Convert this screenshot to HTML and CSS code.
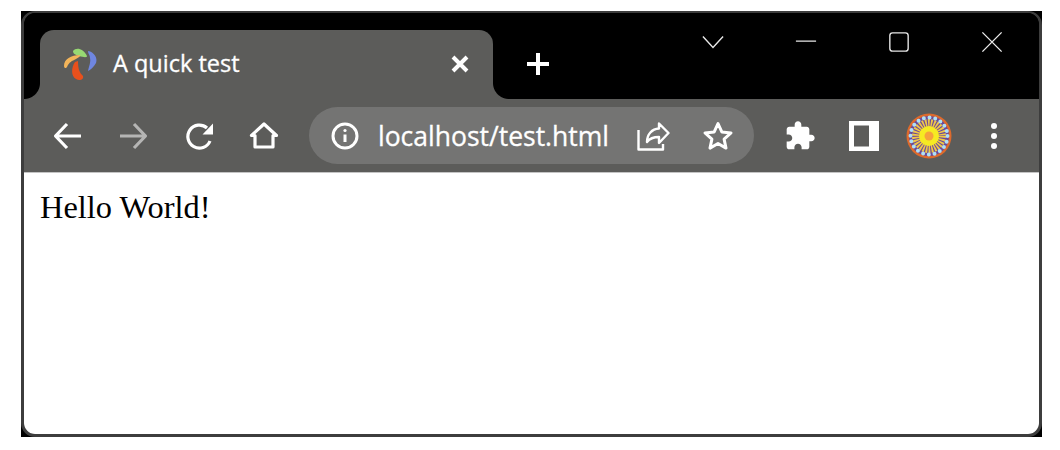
FILE: index.html
```html
<!DOCTYPE html>
<html lang="en">
<head>
  <meta charset="UTF-8" />
  <title>A quick test</title>
  <link rel="stylesheet" href="styles.css">
</head>
<body>
  <div class="window">
    <div class="frame">
      <div class="tabstrip">
        <div class="tab">
          <svg class="favicon" viewBox="0 0 36 36">
            <path fill="#97d873" d="M10 5C13 1 20 2 24 10C24 12 20 11 16 10C13 9 10 8 10 5z"/>
            <path fill="#6f86e0" d="M25 5C31 6 35 12 33 17C31 21 27 24 25 25C26 20 28 16 27 12C27 9 25 8 25 5z"/>
            <path fill="#f2b45a" d="M1 20C1 13 8 9 17 9C18 10 15 12 13 13C9 15 6 16 4 21C3 23 1 22 1 20z"/>
            <path fill="#e8501c" d="M12 16C8 22 8 30 13 33C16 35 21 34 20 30C17 27 15 24 15 15z"/>
          </svg>
          <span class="tab-title">A quick test</span>
          <svg class="tab-close" viewBox="0 0 20 20"><path d="M3 3l14 14M17 3L3 17"/></svg>
        </div>
        <svg class="newtab" viewBox="0 0 26 26"><path d="M13 2v22M2 13h22"/></svg>
        <div class="controls">
          <svg viewBox="0 0 24 24"><path d="M1 6l11 12L23 6"/></svg>
          <svg viewBox="0 0 24 24"><path d="M1 11h22"/></svg>
          <svg viewBox="0 0 24 24"><rect x="2" y="2" width="20" height="20" rx="3"/></svg>
          <svg viewBox="0 0 24 24"><path d="M1.500 1.500l21 21M22.500 1.500l-21 21"/></svg>
        </div>
      </div>

      <div class="toolbar">
        <button class="tool">
          <svg viewBox="0 0 32 32"><path d="M29 16H4M15 4L3.500 16 15 28"/></svg>
        </button>
        <button class="tool dim">
          <svg viewBox="0 0 32 32"><path d="M3 16h25M17 4l11.500 12L17 28"/></svg>
        </button>
        <button class="tool">
          <svg viewBox="0 0 32 32"><path d="M27 21A11.500 11.500 0 1 1 24 8"/><path class="solid" d="M30 3.500V14.500H19.500z"/></svg>
        </button>
        <button class="tool">
          <svg viewBox="0 0 32 32"><path d="M16 4L3.500 15.500H7V27H25V15.500H28.500z"/></svg>
        </button>

        <div class="omnibox">
          <svg class="info" viewBox="0 0 28 28">
            <circle cx="14" cy="14" r="12"/>
            <path d="M14 12.500V20"/>
            <circle class="solid" cx="14" cy="8.500" r="1.600"/>
          </svg>
          <span class="url">localhost/test.html</span>
          <svg class="omni-icon share" viewBox="0 0 34 34">
            <path d="M2.500 11V30.500H27V25"/>
            <path d="M23 4.500L32.500 14 23 24V18C18 18 14 19 11 23C11 15 16 10 23 9.500z"/>
          </svg>
          <svg class="omni-icon star" viewBox="0 0 32 32">
            <path d="M16 3.500l3.800 8.400 9.200 1-6.900 6.200 1.900 9-8-4.600-8 4.600 1.900-9-6.900-6.200 9.200-1z"/>
          </svg>
        </div>

        <div class="toolbar-end">
          <button class="tool">
            <svg viewBox="0 0 24 24"><path class="solid" d="M20.500 11H19V7c0-1.100-.9-2-2-2h-4V3.500C13 2.120 11.880 1 10.500 1S8 2.120 8 3.500V5H4c-1.100 0-1.990.9-1.990 2v3.800H3.500c1.490 0 2.700 1.210 2.700 2.700s-1.210 2.700-2.700 2.700H2V20c0 1.100.9 2 2 2h3.800v-1.500c0-1.490 1.210-2.700 2.700-2.700 1.490 0 2.700 1.210 2.700 2.700V22H17c1.100 0 2-.9 2-2v-4h1.500c1.380 0 2.500-1.120 2.500-2.500S21.880 11 20.500 11z"/></svg>
          </button>
          <button class="tool">
            <svg viewBox="0 0 32 32"><path class="solid" fill-rule="evenodd" d="M1 1h30v30H1zM6 5.500v21h15v-21z"/></svg>
          </button>
          <button class="tool">
            <svg class="avatar" viewBox="0 0 46 46">
              <circle cx="23" cy="23" r="22.500" fill="#dd6a2c"/>
              <circle cx="23" cy="23" r="20" fill="#6b4a98"/>
              <circle cx="23" cy="23" r="8.500" fill="none" stroke="#eec64a" stroke-width="17" stroke-dasharray="1.100 .68"/>
              <circle cx="23" cy="23" r="10" fill="#f6ea22"/>
              <circle cx="23" cy="23" r="4.500" fill="#f6a23c"/>
              <circle cx="23" cy="23" r="18.500" fill="none" stroke="#aee0f7" stroke-width="4" stroke-linecap="round" stroke-dasharray="0 5.810"/>
            </svg>
          </button>
          <button class="tool">
            <svg viewBox="0 0 32 32"><circle class="solid" cx="16" cy="6" r="3"/><circle class="solid" cx="16" cy="16" r="3"/><circle class="solid" cx="16" cy="26" r="3"/></svg>
          </button>
        </div>
      </div>

      <div class="page">Hello World!</div>
    </div>
  </div>
</body>
</html>
```

FILE: styles.css
```css
body {
  margin: 0;
  background: #fff;
}

.window {
  width: 1021px;
  height: 426px;
  margin: 11px 0 0 21px;
  background: #000;
}

.frame {
  display: flex;
  flex-direction: column;
  box-sizing: border-box;
  height: 100%;
  border: 3px solid #3d3d3d;
  border-top-width: 2px;
  border-radius: 14px;
  overflow: hidden;
}

/* tab strip */
.tabstrip {
  display: flex;
  align-items: flex-start;
  height: 86px;
  padding-left: 16px;
  background: #000;
}

.tab {
  position: relative;
  display: flex;
  align-items: center;
  box-sizing: border-box;
  width: 453px;
  height: 69px;
  margin-top: 17px;
  padding: 0 23px 2px 23px;
  background: #5c5c5a;
  border-radius: 14px 14px 0 0;
}

.tab::before,
.tab::after {
  content: "";
  position: absolute;
  bottom: 0;
  width: 16px;
  height: 16px;
}

.tab::before {
  left: -16px;
  background: radial-gradient(circle at 0 0, #000 15.5px, #5c5c5a 16.500px);
}

.tab::after {
  right: -16px;
  background: radial-gradient(circle at 100% 0, #000 15.5px, #5c5c5a 16.500px);
}

.favicon {
  width: 36px;
  height: 36px;
  margin-right: 14px;
}

.tab-title {
  flex: 1;
  margin-top: -2px;
  font-family: "Open Sans", sans-serif;
  font-size: 23.500px;
  color: #fff;
  -webkit-text-stroke: 0.3px #fff;
}

.tab-close {
  width: 20px;
  height: 20px;
  fill: none;
  stroke: #fff;
  stroke-width: 4;
}

.newtab {
  width: 26px;
  height: 26px;
  margin: 38px 0 0 32px;
  fill: none;
  stroke: #fff;
  stroke-width: 4;
}

.controls {
  display: flex;
  gap: 71px;
  margin: 18px 0 0 auto;
  padding-right: 36px;
}

.controls svg {
  width: 22px;
  height: 22px;
  fill: none;
  stroke: #e8e8e8;
  stroke-width: 1.500;
}

/* toolbar */
.toolbar {
  display: flex;
  align-items: center;
  height: 73px;
  padding-left: 11.500px;
  background: #5c5c5a;
  border-bottom: 1px solid #c4c4c4;
}

.toolbar-end {
  display: flex;
  margin-left: 13.350px;
}

.tool {
  display: flex;
  align-items: center;
  justify-content: center;
  width: 65.300px;
  height: 56px;
  padding: 0;
  border: none;
  background: none;
}

.toolbar-end .tool {
  width: 64.700px;
}

.tool svg {
  width: 32px;
  height: 32px;
  fill: none;
  stroke: #fff;
  stroke-width: 3.200;
  stroke-linejoin: round;
}

.tool.dim svg {
  stroke: #b5b5b4;
}

.tool svg.avatar {
  width: 46px;
  height: 46px;
  stroke: none;
}

.toolbar svg .solid {
  fill: #fff;
  stroke: none;
}

.omnibox {
  display: flex;
  align-items: center;
  box-sizing: border-box;
  width: 445px;
  height: 57px;
  margin-left: 12.300px;
  padding: 0 20px 0 22px;
  background: #747473;
  border-radius: 29px;
}

.info {
  width: 28px;
  height: 28px;
  margin-right: 19px;
  fill: none;
  stroke: #fff;
  stroke-width: 3;
}

.url {
  flex: 1;
  font-family: "Open Sans", sans-serif;
  font-size: 26.500px;
  color: #fff;
  white-space: nowrap;
  -webkit-text-stroke: 0.3px #fff;
}

.omni-icon {
  fill: none;
  stroke: #fff;
  stroke-linejoin: round;
}

.omni-icon.share {
  width: 34px;
  height: 34px;
  stroke-width: 2.400;
}

.omni-icon.star {
  width: 32px;
  height: 32px;
  margin-left: 32px;
  stroke-width: 3;
}

/* page content */
.page {
  flex: 1;
  padding: 16px 16px;
  background: #fff;
  font-family: "Liberation Serif", "Times New Roman", serif;
  font-size: 32.400px;
  color: #000;
}
```
